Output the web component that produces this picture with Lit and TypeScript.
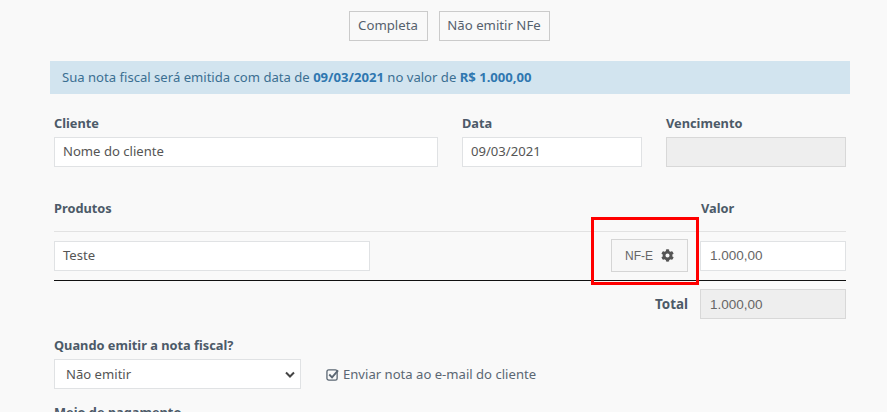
import { LitElement, html, css } from "lit";
import { customElement } from "lit/decorators.js";

@customElement("app-root")
export class AppRoot extends LitElement {
  static styles = css`
    :host { display: block; height: 412px; overflow: hidden; background: #f9f9f9; position: relative; font-family: "Noto Sans", "Open Sans", sans-serif; font-size: 13px; color: #4f5b67; }
    * { box-sizing: border-box; }
    .page { padding: 11px 37px 0 50px; display: flex; flex-direction: column; }
    .tabs { display: flex; justify-content: center; gap: 11px; height: 30px; padding-right: 2px; }
    .tab { border: 1px solid #cbcbcb; display: flex; align-items: center; justify-content: center; padding-bottom: 2px; font-size: 13.2px; color: #55616d; }
    .tab.a { width: 79px; }
    .tab.b { width: 111px; }
    .alert { margin-top: 20px; height: 33px; background: #d2e4ef; color: #3b6f92; display: flex; align-items: center; padding: 0 0 2px 12px; font-size: 13.1px; white-space: pre; }
    .alert b { color: #2f77b0; font-weight: 700; }
    .form { padding: 0 4px; display: flex; flex-direction: column; }
    label, .lbl { font-weight: 700; font-size: 12.8px; color: #4c5a68; line-height: 18px; display: block; }
    .row1 { display: grid; grid-template-columns: 384px 180px 180px; column-gap: 24px; margin-top: 20px; }
    .field { height: 30px; margin-top: 5px; background: #fff; border: 1px solid #e0e2e4; padding: 0 8px 2px; display: flex; align-items: center; font-size: 13.1px; color: #555; }
    .field.off { background: #eee; border-color: #d8d8d8; }
    .num { font-family: "Liberation Sans", Arial, sans-serif; font-size: 13.5px; padding: 0 0 0 9px; margin-top: 0; color: #666; }
    .prodhead { display: grid; grid-template-columns: 647px 145px; margin-top: 32px; padding-bottom: 14px; border-bottom: 1px solid #e2e2e2; }
    .prodrow { display: flex; align-items: center; justify-content: space-between; height: 49px; padding-bottom: 1px; border-bottom: 1px solid #111; }
    .prodrow .field { margin-top: 0; }
    .teste { width: 316px; }
    .prodright { display: flex; align-items: center; gap: 12px; }
    .nfe { width: 77px; height: 33px; border: 1px solid #d5d5d5; background: #f7f7f7; display: flex; align-items: center; justify-content: center; gap: 8px; font-family: "Liberation Sans", Arial, sans-serif; font-size: 12px; color: #666; }
    .nfe svg { width: 13px; height: 13px; fill: #555; }
    .val { width: 146px; }
    .totalrow { display: flex; justify-content: flex-end; align-items: center; gap: 12px; margin-top: 8px; }
    .totalrow .lbl { font-size: 13.4px; }
    .totalrow .field { width: 146px; }
    .emit { margin-top: 17px; }
    .emitrow { display: flex; align-items: center; gap: 25px; margin-top: 5px; }
    .select { width: 247px; height: 30px; background: #fff; border: 1px solid #e0e2e4; display: flex; align-items: center; justify-content: space-between; padding: 0 5px 0 11px; font-size: 13.1px; color: #555; }
    .select span { padding-bottom: 1px; }
    .select svg { width: 10px; height: 7px; }
    .check { display: flex; align-items: center; gap: 4px; font-size: 13.1px; color: #5b6773; }
    .check svg { width: 13px; height: 13px; }
    .check span { padding-bottom: 1px; }
    .pay { margin-top: 14px; }
    .mark { position: absolute; left: 591px; top: 217px; width: 108px; height: 68px; border: 3px solid #f00; pointer-events: none; }
  `;

  render() {
    return html`
      <div class="page">
        <div class="tabs">
          <div class="tab a">Completa</div>
          <div class="tab b">Não emitir NFe</div>
        </div>
        <div class="alert">Sua nota fiscal será emitida com data de <b>09/03/2021</b> no valor de <b>R$ 1.000,00</b></div>
        <div class="form">
          <div class="row1">
            <div><label>Cliente</label><div class="field">Nome do cliente</div></div>
            <div><label>Data</label><div class="field">09/03/2021</div></div>
            <div><label>Vencimento</label><div class="field off"></div></div>
          </div>
          <div class="prodhead"><span class="lbl">Produtos</span><span class="lbl">Valor</span></div>
          <div class="prodrow">
            <div class="field teste">Teste</div>
            <div class="prodright">
              <div class="nfe">NF-E
                <svg viewBox="0 0 512 512"><path d="M487 316l-42-25a192 192 0 0 0 0-70l42-25c5-3 7-9 5-14-11-35-30-67-54-93-4-4-10-5-15-2l-42 24c-18-15-38-27-60-35V28c0-6-4-11-9-12-36-8-73-8-109 0-5 1-9 6-9 12v48c-22 8-42 20-60 35L92 87c-5-3-11-2-15 2-24 26-43 58-54 93-2 5 0 11 5 14l42 25a192 192 0 0 0 0 70l-42 25c-5 3-7 9-5 14 11 35 30 67 54 93 4 4 10 5 15 2l42-24c18 15 38 27 60 35v48c0 6 4 11 9 12 36 8 73 8 109 0 5-1 9-6 9-12v-48c22-8 42-20 60-35l42 24c5 3 11 2 15-2 24-26 43-58 54-93 2-5 0-11-5-14zM256 336a80 80 0 1 1 0-160 80 80 0 0 1 0 160z"/></svg>
              </div>
              <div class="field num val">1.000,00</div>
            </div>
          </div>
          <div class="totalrow"><span class="lbl">Total</span><div class="field off num">1.000,00</div></div>
          <div class="emit">
            <label>Quando emitir a nota fiscal?</label>
            <div class="emitrow">
              <div class="select"><span>Não emitir</span>
                <svg viewBox="0 0 10 7"><path d="M1 1.5l4 4 4-4" fill="none" stroke="#444" stroke-width="2"/></svg>
              </div>
              <div class="check">
                <svg viewBox="0 0 14 14"><rect x="1" y="2" width="11" height="11" rx="2" fill="none" stroke="#5b6773" stroke-width="1.4"/><path d="M3.5 7l3 3 6.5-7.5" fill="none" stroke="#5b6773" stroke-width="2"/></svg>
                <span>Enviar nota ao e-mail do cliente</span>
              </div>
            </div>
          </div>
          <label class="pay">Meio de pagamento</label>
        </div>
      </div>
      <div class="mark"></div>
    `;
  }
}
